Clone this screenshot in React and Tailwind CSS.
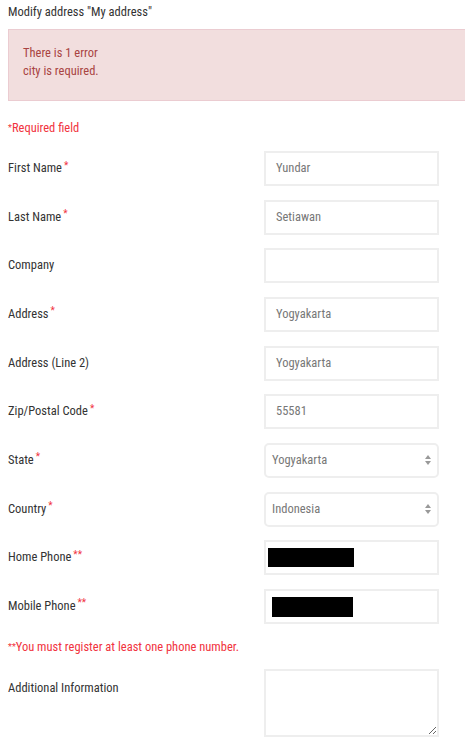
const Req = ({ n = 1 }) => (
  <sup className="text-[#f13340] text-[10px] ml-[2px] relative top-[-3px]">{"*".repeat(n)}</sup>
);

const Label = ({ children, req }) => (
  <label className="w-[256px] text-[12.5px] text-[#333] flex items-center">
    {children}
    {req ? <Req n={req} /> : null}
  </label>
);

const TextInput = ({ value }) => (
  <div className="w-[175px] h-[35px] border-2 border-[#eeeeee] bg-white flex items-center pl-[10px] text-[12.5px] text-[#777]">
    {value}
  </div>
);

const SelectBox = ({ value }) => (
  <div className="w-[175px] h-[35px] border-2 border-[#eeeeee] rounded-[5px] bg-white flex items-center justify-between pl-[6px] pr-[5px] text-[12.5px] text-[#777]">
    <span>{value}</span>
    <svg width="8" height="12" viewBox="0 0 8 12">
      <path d="M4 1 L7 5 L1 5 Z" fill="#999" />
      <path d="M4 11 L7 7 L1 7 Z" fill="#999" />
    </svg>
  </div>
);

const Row = ({ label, req, children }) => (
  <div className="flex items-center">
    <Label req={req}>{label}</Label>
    {children}
  </div>
);

export default function App() {
  return (
    <div
      className="w-[465px] h-[750px] overflow-hidden bg-white pl-2 [font-stretch:87.5%]"
      style={{ fontFamily: "Roboto, 'Liberation Sans', sans-serif" }}
    >
      <h1 className="text-[12.5px] text-[#333] pt-[4px] h-[29px] leading-[16px]">
        Modify address "My address"
      </h1>
      <div className="w-[470px] h-[72px] bg-[#f2dede] border border-[#ebccd1] text-[#a94442] text-[12.5px] leading-[18px] pt-[14px] pl-[14px]">
        <p>There is 1 error</p>
        <p>city is required.</p>
      </div>
      <p className="text-[12.5px] text-[#f13340] mt-[19px] h-[31px] leading-[16px]">
        <sup className="text-[9px] relative top-[-1px]">*</sup>Required field
      </p>
      <div className="flex flex-col gap-[13.67px]">
        <Row label="First Name" req={1}>
          <TextInput value="Yundar" />
        </Row>
        <Row label="Last Name" req={1}>
          <TextInput value="Setiawan" />
        </Row>
        <Row label="Company">
          <TextInput value="" />
        </Row>
        <Row label="Address" req={1}>
          <TextInput value="Yogyakarta" />
        </Row>
        <Row label="Address (Line 2)">
          <TextInput value="Yogyakarta" />
        </Row>
        <Row label="Zip/Postal Code" req={1}>
          <TextInput value="55581" />
        </Row>
        <Row label="State" req={1}>
          <SelectBox value="Yogyakarta" />
        </Row>
        <Row label="Country" req={1}>
          <SelectBox value="Indonesia" />
        </Row>
        <Row label="Home Phone" req={2}>
          <div className="w-[175px] h-[35px] border-2 border-[#eeeeee] bg-white flex items-center pl-[2px]">
            <div className="w-[86px] h-[19px] bg-black" />
          </div>
        </Row>
        <Row label="Mobile Phone" req={2}>
          <div className="w-[175px] h-[35px] border-2 border-[#eeeeee] bg-white flex items-center pl-[6px] pt-[2px]">
            <div className="w-[81px] h-[20px] bg-black" />
          </div>
        </Row>
      </div>
      <p className="text-[12.5px] text-[#f13340] mt-[15px] leading-[16px]">
        <sup className="text-[9px] relative top-[-1px]">**</sup>You must register at least one phone number.
      </p>
      <div className="flex mt-[14px]">
        <label className="w-[256px] text-[12.5px] text-[#333] pt-[10px]">Additional Information</label>
        <textarea
          readOnly
          className="w-[175px] h-[68px] border-2 border-[#eeeeee] bg-white outline-none"
        />
      </div>
    </div>
  );
}
